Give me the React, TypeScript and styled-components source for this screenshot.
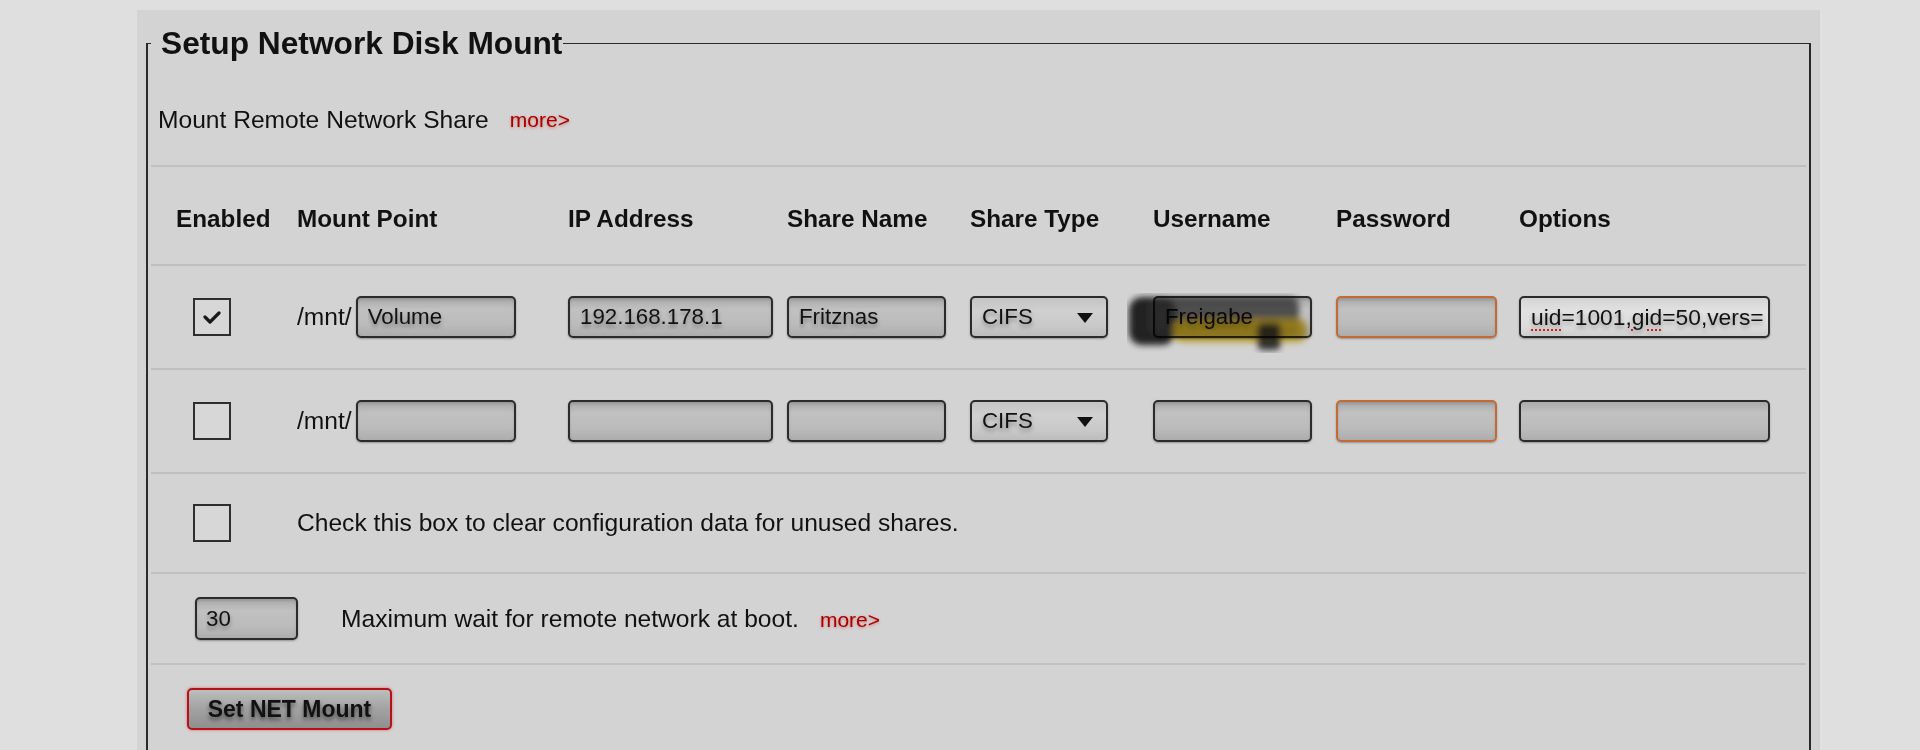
import styled, { createGlobalStyle } from 'styled-components';

const GlobalStyle = createGlobalStyle`
  html, body {
    margin: 0;
    padding: 0;
    background: #dfdfdf;
  }
  body {
    font-family: "Liberation Sans", Arial, Helvetica, sans-serif;
    color: #111;
  }
`;

const Page = styled.div`
  height: 750px;
  overflow: hidden;
  padding-top: 10px;
  box-sizing: border-box;
`;

const Panel = styled.div`
  margin-left: 137px;
  width: 1683px;
  min-height: 740px;
  background: #d3d3d3;
  padding: 15px 9px 0 9px;
  box-sizing: border-box;
`;

const Fieldset = styled.fieldset`
  margin: 0;
  padding: 0 3px 40px;
  border: 2px solid #2a2a2a;
  border-top-width: 1px;
  min-inline-size: 0;
`;

const Legend = styled.legend`
  padding: 0 1px 0 10px;
  font-size: 31.7px;
  font-weight: bold;
  line-height: 36px;
`;

const Intro = styled.div`
  display: flex;
  align-items: center;
  gap: 21px;
  padding: 45px 0 31px 7px;
  font-size: 24.6px;
  line-height: 28px;
`;

const More = styled.a`
  color: #a80000;
  font-size: 21px;
  text-decoration: none;
  text-shadow: 0 1px 3px rgba(220, 0, 0, 0.45);
  cursor: pointer;
`;

const RowBase = styled.div<{ $h: number; $pt?: number }>`
  box-sizing: border-box;
  height: ${(p) => p.$h}px;
  padding-top: ${(p) => p.$pt ?? 0}px;
  border-top: 2px solid #c0c0c0;
`;

const GridRow = styled(RowBase)`
  display: grid;
  grid-template-columns: 121px 271px 219px 183px 183px 183px 183px 1fr;
  align-items: center;
  padding-left: 25px;
`;

const FlexRow = styled(RowBase)<{ $pl: number }>`
  display: flex;
  align-items: center;
  padding-left: ${(p) => p.$pl}px;
`;

const ButtonRow = styled(RowBase)`
  padding-left: 36px;
`;

const HeadCell = styled.div`
  font-size: 24.3px;
  font-weight: bold;
  white-space: nowrap;
`;

const Label = styled.span<{ $ml?: number }>`
  font-size: 24.6px;
  white-space: nowrap;
  margin-left: ${(p) => p.$ml ?? 0}px;
`;

const WideLabel = styled(Label)`
  grid-column: 2 / -1;
`;

const Check = styled.span`
  display: flex;
  align-items: center;
  justify-content: center;
  width: 38px;
  height: 38px;
  margin-left: 17px;
  box-sizing: border-box;
  border: 2px solid #2e2e2e;
  background: #d7d7d7;
`;

const MountCell = styled.div`
  display: flex;
  align-items: center;
  gap: 4px;
`;

const TextInput = styled.input<{ $w: number; $warn?: boolean }>`
  box-sizing: border-box;
  width: ${(p) => p.$w}px;
  height: 42px;
  margin: 0;
  padding: 0 10px;
  border: 2px solid ${(p) => (p.$warn ? '#c46a35' : '#2b2b2b')};
  border-radius: 5px;
  background: linear-gradient(#aaaaaa, #c1c1c1 30%, #bbbbbb 70%, #adadad);
  box-shadow: 0 1px 2px rgba(0, 0, 0, 0.3), inset 0 2px 3px rgba(0, 0, 0, 0.12);
  font-family: inherit;
  font-size: 22.3px;
  color: #111;
  text-shadow: 0 3px 4px rgba(0, 0, 0, 0.35);
  outline: none;
`;

const SmallInput = styled(TextInput)`
  height: 43px;
  padding-left: 9px;
`;

const SmudgeWrap = styled.div`
  position: relative;
  width: 159px;
`;

const Smudge = styled.svg`
  position: absolute;
  left: -26px;
  top: -3px;
  pointer-events: none;
  mix-blend-mode: multiply;
`;

const SelectBox = styled.div`
  position: relative;
  box-sizing: border-box;
  width: 138px;
  height: 42px;
  display: flex;
  align-items: center;
  padding-left: 10px;
  border: 2px solid #2b2b2b;
  border-radius: 5px;
  background: linear-gradient(#c4c4c4, #d0d0d0 35%, #c8c8c8 75%, #bcbcbc);
  box-shadow: 0 1px 2px rgba(0, 0, 0, 0.3);
  font-size: 22.3px;
  text-shadow: 0 3px 4px rgba(0, 0, 0, 0.35);

  &::after {
    content: '';
    position: absolute;
    right: 13px;
    top: 15px;
    border-left: 8.5px solid transparent;
    border-right: 8.5px solid transparent;
    border-top: 10px solid #111;
  }
`;

const OptionBox = styled.div`
  box-sizing: border-box;
  width: 251px;
  height: 42px;
  display: flex;
  align-items: center;
  padding-left: 10px;
  overflow: hidden;
  white-space: nowrap;
  border: 2px solid #2b2b2b;
  border-radius: 5px;
  background: linear-gradient(#d4d4d4, #e2e2e2 35%, #dcdcdc 75%, #cfcfcf);
  box-shadow: 0 1px 2px rgba(0, 0, 0, 0.3);
  font-size: 22.8px;
  text-shadow: 0 3px 4px rgba(0, 0, 0, 0.3);
`;

const EmptyOption = styled(OptionBox)`
  background: linear-gradient(#aaaaaa, #c1c1c1 30%, #bbbbbb 70%, #adadad);
`;

const Misspelled = styled.span`
  text-decoration: underline dotted #d02020;
  text-decoration-thickness: 2px;
  text-underline-offset: 5px;
`;

const SetButton = styled.button`
  box-sizing: border-box;
  width: 205px;
  height: 42px;
  margin: 0;
  padding: 0;
  border: 2px solid #b3121a;
  border-radius: 5px;
  background: linear-gradient(#bdbdbd, #a2a2a2 50%, #8f8f8f);
  box-shadow: 0 0 3px rgba(220, 0, 0, 0.5);
  font-family: inherit;
  font-size: 23px;
  font-weight: bold;
  color: #111;
  text-shadow: 0 3px 4px rgba(0, 0, 0, 0.5);
  cursor: pointer;
`;

const columns = ['Enabled', 'Mount Point', 'IP Address', 'Share Name', 'Share Type', 'Username', 'Password', 'Options'];

function CheckMark() {
  return (
    <svg width="18" height="13" viewBox="0 0 18 13">
      <path d="M2 6 L7 11 L16 2" fill="none" stroke="#1a1a1a" strokeWidth="3.2" strokeLinecap="round" strokeLinejoin="round" />
    </svg>
  );
}

function ShareRow({ filled }: { filled: boolean }) {
  return (
    <GridRow $h={104}>
      <Check>{filled && <CheckMark />}</Check>
      <MountCell>
        <Label>/mnt/</Label>
        <TextInput $w={160} defaultValue={filled ? 'Volume' : ''} />
      </MountCell>
      <TextInput $w={205} defaultValue={filled ? '192.168.178.1' : ''} />
      <TextInput $w={159} defaultValue={filled ? 'Fritznas' : ''} />
      <SelectBox>CIFS</SelectBox>
      {filled ? (
        <SmudgeWrap>
          <TextInput $w={159} defaultValue="Freigabe" />
          {/* redaction scribble drawn over the username */}
          <Smudge width="190" height="60" viewBox="0 0 190 60">
            <defs>
              <filter id="smear" x="-20%" y="-30%" width="140%" height="160%">
                <feGaussianBlur stdDeviation="3.4" />
              </filter>
            </defs>
            <g filter="url(#smear)">
              <rect x="2" y="4" width="46" height="48" rx="13" fill="#1a1a1a" opacity="0.92" />
              <rect x="24" y="4" width="148" height="38" rx="8" fill="#3c3c3c" opacity="0.78" />
              <rect x="46" y="26" width="134" height="23" rx="9" fill="#d2ad16" opacity="0.85" />
              <rect x="130" y="30" width="24" height="27" rx="6" fill="#222" opacity="0.88" />
            </g>
          </Smudge>
        </SmudgeWrap>
      ) : (
        <TextInput $w={159} />
      )}
      <TextInput $w={161} $warn type="password" />
      {filled ? (
        <OptionBox>
          <Misspelled>uid</Misspelled>=1001,<Misspelled>gid</Misspelled>=50,vers=
        </OptionBox>
      ) : (
        <EmptyOption />
      )}
    </GridRow>
  );
}

export default function App() {
  return (
    <>
      <GlobalStyle />
      <Page>
        <Panel>
          <Fieldset>
            <Legend>Setup Network Disk Mount</Legend>
            <Intro>
              <span>Mount Remote Network Share</span>
              <More>more&gt;</More>
            </Intro>

            <GridRow $h={99} $pt={6}>
              {columns.map((c) => (
                <HeadCell key={c}>{c}</HeadCell>
              ))}
            </GridRow>

            <ShareRow filled />
            <ShareRow filled={false} />

            <GridRow $h={100}>
              <Check />
              <WideLabel>Check this box to clear configuration data for unused shares.</WideLabel>
            </GridRow>

            <FlexRow $h={91} $pl={44}>
              <SmallInput $w={103} defaultValue="30" />
              <Label $ml={43}>Maximum wait for remote network at boot.</Label>
              <Label $ml={21}>
                <More>more&gt;</More>
              </Label>
            </FlexRow>

            <ButtonRow $h={90} $pt={23}>
              <SetButton>Set NET Mount</SetButton>
            </ButtonRow>
          </Fieldset>
        </Panel>
      </Page>
    </>
  );
}
